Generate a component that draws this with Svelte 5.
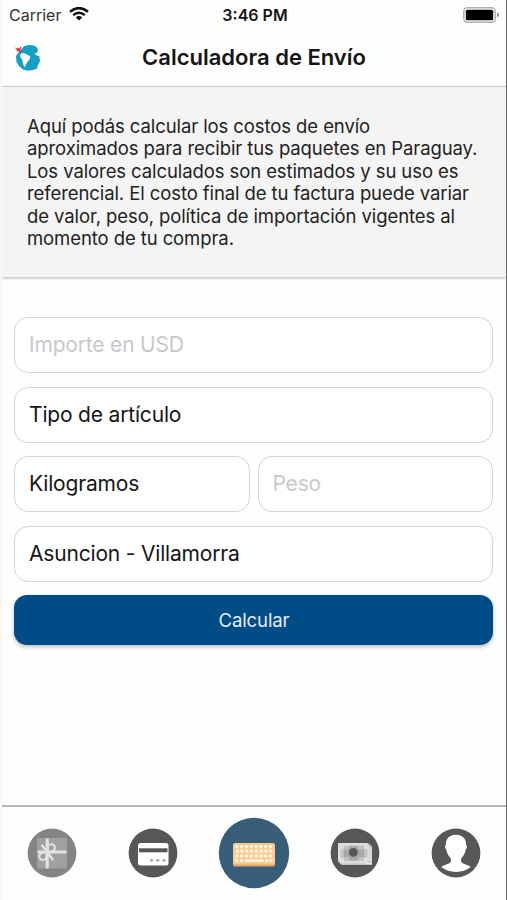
<script>
	let amount = $state('');
	let weight = $state('');
	let article = 'Tipo de artículo';
	let unit = 'Kilogramos';
	let branch = 'Asuncion - Villamorra';

	const info = [
		'Aquí podás calcular los costos de envío',
		'aproximados para recibir tus paquetes en Paraguay.',
		'Los valores calculados son estimados y su uso es',
		'referencial. El costo final de tu factura puede variar',
		'de valor, peso, política de importación vigentes al',
		'momento de tu compra.'
	];

	// keyboard icon keys
	const rows = [0, 1, 2];
	const cols = [0, 1, 2, 3, 4, 5, 6, 7];
</script>

<div class="screen">
	<div class="status">
		<div class="carrier">
			<span>Carrier</span>
			<svg width="20" height="14" viewBox="0 0 20 14">
				<path d="M1 4.8 Q10 -2.6 19 4.8" fill="none" stroke="#111" stroke-width="2.5" />
				<path d="M4.2 8.1 Q10 3.4 15.8 8.1" fill="none" stroke="#111" stroke-width="2.4" />
				<path d="M6.8 10.4 Q10 7.8 13.2 10.4 L10 13.6Z" fill="#111" />
			</svg>
		</div>
		<div class="time">3:46 PM</div>
		<svg class="battery" width="37" height="16" viewBox="0 0 37 16">
			<rect x="0.8" y="0.8" width="31.4" height="14.4" rx="3.6" fill="#fff" stroke="#b0b0b0" stroke-width="1.5" />
			<rect x="2.8" y="2.8" width="27.4" height="10.4" rx="1.5" fill="#000" />
			<path d="M34 5.2 Q36.2 6 36.2 7.8 Q36.2 9.6 34 10.4Z" fill="#999" />
		</svg>
	</div>

	<header>
		<svg class="logo" width="28" height="28" viewBox="0 0 28 28">
			<path d="M10 2.2 L14 1 L19 1.3 L22.5 3 L24 6 L23.3 8.5 L20.8 9.6 L22 11.3 L25.2 12 L26 17 L24 21 L23 24.5 L19 26 L14 26.8 L9 25.5 L5 22 L2.5 18 L2 12 L4 9Z" fill="#159fc6" />
			<path d="M6.8 9.5 L10 9 L16 12 L15.8 15 L13 18.5 L10.6 23.5 L9 20 L8.2 15.5 L6 12.6Z" fill="#fff" />
			<path d="M0.8 3.6 L4.4 4.5 L7 2.7 L7.8 3.6 L6.2 5.8 L8 8.7 L6.4 8.6 L4.8 7.1 L2.8 8 L3 6.2Z" fill="#e8333f" />
		</svg>
		<h1>Calculadora de Envío</h1>
	</header>

	<section class="info">
		<p>
			{#each info as line}
				<span>{line}</span>
			{/each}
		</p>
	</section>

	<form>
		<input placeholder="Importe en USD" type="text" bind:value={amount} />
		<div class="field article">{article}</div>
		<div class="row">
			<div class="field unit">{unit}</div>
			<input placeholder="Peso" type="text" bind:value={weight} />
		</div>
		<div class="field branch">{branch}</div>
		<button type="button">Calcular</button>
	</form>

	<nav>
		<svg width="50" height="50" viewBox="0 0 50 50">
			<circle cx="25" cy="25" r="24.4" fill="#848484" />
			<rect x="10" y="10" width="30" height="30.5" fill="#a0a0a0" />
			<g fill="none" stroke="#e2e2e2">
				<path d="M20.2 10.5V40.5M10.5 24H39.5" stroke-width="3.2" />
				<path d="M20.2 24C20 18.5 21.5 16.2 24.5 16.2C28.5 16.2 29 22 25.5 23.2C24 23.8 22 24 20.2 24Z" stroke-width="2" />
				<path d="M20.2 24C20.3 29.5 19 32 16 32C11.5 32 11.2 26.5 14.5 25C16 24.3 18 24 20.2 24Z" stroke-width="2" />
				<path d="M14.6 16.8L20.2 24L26.2 32.2" stroke-width="2.3" />
			</g>
		</svg>
		<svg width="50" height="50" viewBox="0 0 50 50">
			<circle cx="25" cy="25" r="24.4" fill="#575757" />
			<rect x="10" y="15" width="30.5" height="22.5" rx="2.5" fill="#fff" />
			<rect x="11" y="20.3" width="28.5" height="4" fill="#575757" />
			<g fill="#a8a8a8">
				<circle cx="23.5" cy="32.3" r="1.5" />
				<circle cx="29.7" cy="32.3" r="1.5" />
				<circle cx="36" cy="32.3" r="1.5" />
			</g>
		</svg>
		<svg width="72" height="72" viewBox="0 0 72 72">
			<circle cx="36" cy="36" r="35.2" fill="#385d78" />
			<rect x="15" y="28" width="42" height="21.5" rx="2" fill="#e8a75c" />
			<rect x="15" y="26" width="42" height="21.5" rx="2" fill="#fac98c" />
			<g fill="#fff5e6">
				{#each rows as r}
					{#each cols as c}
						<rect x={17.3 + c * 4.8 + (r === 1 ? 0.4 : 0)} y={28.2 + r * 4.6} width="3.2" height="3" rx="0.6" />
					{/each}
				{/each}
				<rect x="17.3" y="42.3" width="3" height="2.8" rx="0.6" />
				<rect x="22" y="42.3" width="3" height="2.8" rx="0.6" />
				<rect x="26.7" y="42.3" width="18.8" height="2.8" rx="0.6" />
				<rect x="47.1" y="42.3" width="3" height="2.8" rx="0.6" />
				<rect x="51.7" y="42.3" width="3" height="2.8" rx="0.6" />
			</g>
		</svg>
		<svg width="50" height="50" viewBox="0 0 50 50">
			<circle cx="25" cy="25" r="24.4" fill="#575757" />
			<path d="M10 15H38L42 18.5V37H11.5L8.5 34Z" fill="#c4c4c4" />
			<path d="M8 15H36.5L39.5 18V32.5L36.5 35.5H11L8 32.5Z" fill="#dedede" />
			<path d="M14 17.5H34V20L37.5 21.5V29L34 30.5V33H14V30.5L10.5 29V21.5L14 20Z" fill="#c2c2c2" />
			<path d="M14 21.5H18L20 18H27L29 21.5H34V29H29L27 32.5H20L18 29H14Z" fill="#a8a8a8" />
			<circle cx="23.3" cy="24.4" r="4.4" fill="#575757" />
			<path d="M41 19V35.5H36" fill="none" stroke="#eee" stroke-width="1" />
		</svg>
		<svg width="50" height="50" viewBox="0 0 50 50">
			<circle cx="25" cy="25" r="24.4" fill="#575757" />
			<path d="M25 6.8C31.7 6.8 35.2 11 35.2 17.1C36.4 18 36.2 20.3 34.8 21.5C34 25.4 32.3 28.5 30.1 30.5V33.2C30.6 36 37.5 36.5 39.8 39.1C35.8 42.3 30.8 44 25 44C19.2 44 14.2 42.3 10.2 39.1C12.5 36.5 19.4 36 19.9 33.2V30.5C17.7 28.5 16 25.4 15.2 21.5C13.8 20.3 13.6 18 14.8 17.1C14.8 11 18.3 6.8 25 6.8Z" fill="#fff" />
		</svg>
	</nav>
</div>

<style>
	:global(body) {
		background: #fefefe;
	}

	.screen {
		display: flex;
		flex-direction: column;
		box-sizing: border-box;
		width: 507px;
		height: 900px;
		overflow: hidden;
		border-left: 2px solid #f7f7f7;
		border-right: 1px solid #666;
		background: #fefefe;
		color: #151515;
		font-family: Inter, "Liberation Sans", sans-serif;
	}

	.status {
		display: grid;
		grid-template-columns: 1fr auto 1fr;
		align-items: center;
		height: 30px;
		padding: 0 6px 0 7px;
	}

	.carrier {
		display: flex;
		align-items: center;
		gap: 8px;
		font-size: 16px;
		color: #333;
	}

	.carrier svg {
		margin-top: -2px;
	}

	.time {
		padding-left: 1px;
		font-size: 16px;
		font-weight: 600;
	}

	.battery {
		justify-self: end;
	}

	header {
		display: grid;
		grid-template-columns: 60px 1fr 60px;
		align-items: center;
		height: 56px;
		border-bottom: 1px solid #d5d5d5;
	}

	.logo {
		margin-left: 12px;
	}

	h1 {
		margin: 0 0 2px;
		font-size: 22px;
		font-weight: 600;
		line-height: 52px;
		text-align: center;
		white-space: nowrap;
	}

	.info {
		box-sizing: border-box;
		height: 190px;
		padding: 28px 0 0 25px;
		background: #f4f4f4;
		box-shadow: 0 1px 3px rgba(0, 0, 0, 0.3);
	}

	.info p {
		margin: 0;
		font-size: 18.5px;
		line-height: 22.4px;
		letter-spacing: -0.09px;
		color: #222;
	}

	.info span {
		display: block;
		white-space: nowrap;
	}

	form {
		display: flex;
		flex-direction: column;
		gap: 13.5px;
		padding: 40px 13px 0 12px;
	}

	input,
	.field {
		box-sizing: border-box;
		width: 100%;
		min-width: 0;
		height: 56px;
		padding: 0 14px;
		border: 1px solid #d4d4d4;
		border-radius: 14px;
		background: #fff;
		font-family: inherit;
		font-size: 21px;
		line-height: 54px;
		letter-spacing: -0.18px;
		color: #151515;
		outline: none;
	}

	input {
		padding-bottom: 1px;
	}

	input::placeholder {
		color: #c8c8cc;
		opacity: 1;
	}

	.row {
		display: flex;
		gap: 8px;
	}

	button {
		height: 50px;
		padding: 0 0 0 1px;
		border: 0;
		border-radius: 13px;
		background: #004c87;
		box-shadow: 0 2px 4px rgba(0, 0, 0, 0.25);
		font-family: inherit;
		font-size: 18.6px;
		letter-spacing: -0.15px;
		color: #e4edf5;
	}

	nav {
		display: grid;
		grid-template-columns: repeat(5, 101px);
		align-items: center;
		justify-content: center;
		justify-items: center;
		box-sizing: border-box;
		height: 95px;
		margin-top: auto;
		padding-bottom: 1px;
		border-top: 2px solid #b8b8b8;
	}
</style>
